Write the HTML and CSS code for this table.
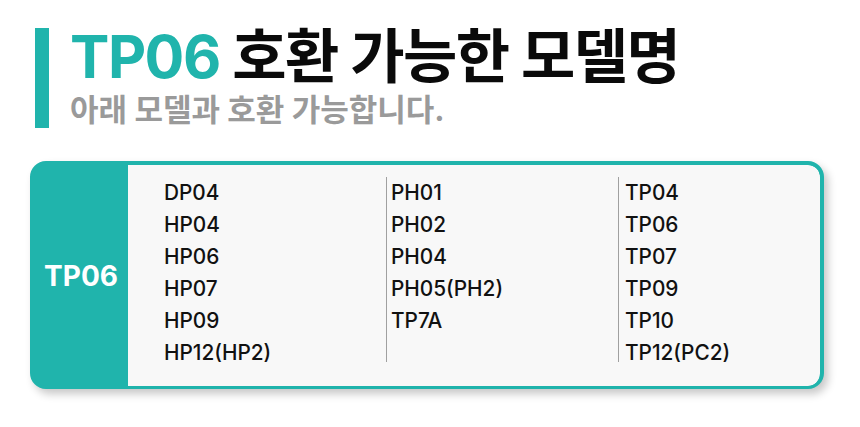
FILE: index.html
```html
<!DOCTYPE html>
<html lang="ko">
<head>
<meta charset="utf-8">
<title>TP06 호환 가능한 모델명</title>
<link rel="stylesheet" href="styles.css">
</head>
<body>
  <header class="header">
    <div class="bar"></div>
    <div class="texts">
      <h1 class="title"><span class="accent">TP06</span> 호환 가능한 모델명</h1>
      <p class="subtitle">아래 모델과 호환 가능합니다.</p>
    </div>
  </header>
  <section class="card">
    <div class="label">TP06</div>
    <div class="list">
      <ul class="col col1">
        <li>DP04</li>
        <li>HP04</li>
        <li>HP06</li>
        <li>HP07</li>
        <li>HP09</li>
        <li>HP12(HP2)</li>
      </ul>
      <ul class="col col2">
        <li>PH01</li>
        <li>PH02</li>
        <li>PH04</li>
        <li>PH05(PH2)</li>
        <li>TP7A</li>
      </ul>
      <ul class="col col3">
        <li>TP04</li>
        <li>TP06</li>
        <li>TP07</li>
        <li>TP09</li>
        <li>TP10</li>
        <li>TP12(PC2)</li>
      </ul>
    </div>
  </section>
</body>
</html>
```
FILE: styles.css
```css
* { box-sizing: border-box; }
html, body { margin: 0; padding: 0; background: #ffffff; }
body {
  width: 860px;
  height: 427px;
  overflow: hidden;
  font-family: Inter, "Noto Sans CJK KR", sans-serif;
}
.header {
  display: flex;
  gap: 21px;
  margin: 28px 0 0 35px;
  height: 100px;
}
.bar {
  width: 14px;
  background: #20b4ac;
}
.texts {
  display: flex;
  flex-direction: column;
}
.title {
  margin: -1px 0 0 0;
  font-size: 59px;
  line-height: 60px;
  font-weight: 700;
  color: #0a0a0a;
  letter-spacing: -1.5px;
  white-space: nowrap;
}
.accent { color: #20b4ac; }
.subtitle {
  margin: 5px 0 0 0;
  font-size: 31px;
  line-height: 36px;
  font-weight: 700;
  color: #9a9a9a;
  letter-spacing: 0;
  white-space: nowrap;
}
.card {
  display: flex;
  margin: 33px 0 0 30px;
  width: 794px;
  height: 228px;
  border: 4px solid #20b4ac;
  border-bottom-width: 3px;
  border-radius: 16px;
  background: #20b4ac;
  overflow: hidden;
  box-shadow: 4px 5px 8px rgba(0, 0, 0, 0.22);
}
.label {
  width: 94px;
  display: flex;
  align-items: center;
  justify-content: center;
  color: #ffffff;
  font-size: 28px;
  font-weight: 700;
}
.list {
  flex: 1;
  display: flex;
  background: #f8f8f8;
  border-radius: 0 12px 12px 0;
  padding: 12px 0 0 36px;
}
.col {
  list-style: none;
  margin: 0;
  padding: 0;
  height: 185px;
  font-size: 20.8px;
  line-height: 32px;
  font-weight: 500;
  color: #111111;
}
.col1 { width: 222px; }
.col2 { width: 232px; border-left: 1px solid #a0a0a0; padding-left: 4px; }
.col3 { border-left: 1px solid #a0a0a0; padding-left: 6px; }
```
